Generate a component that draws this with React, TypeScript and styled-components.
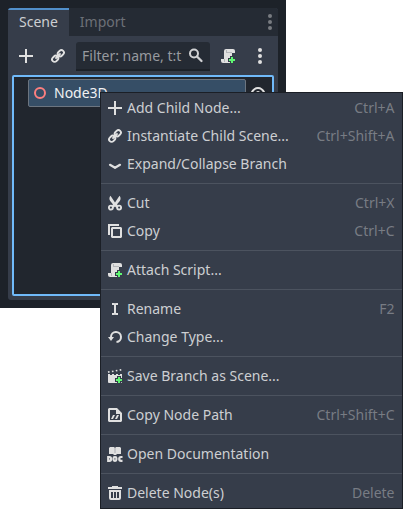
import React from "react";
import styled, { createGlobalStyle } from "styled-components";

const GlobalStyle = createGlobalStyle`
  * { box-sizing: border-box; }
  body {
    margin: 0;
    background: #fff;
    font-family: "Noto Sans", sans-serif;
    font-size: 14px;
    line-height: 20px;
    overflow: hidden;
  }
`;

const Screen = styled.main`
  position: relative;
  width: 403px;
  height: 509px;
`;

const EditorFrame = styled.div`
  width: 286px;
  height: 308px;
  padding: 8px;
  background: #1d2229;
`;

const Dock = styled.section`
  display: flex;
  flex-direction: column;
  height: 292px;
  background: #363d4a;
  border-radius: 3px;
  overflow: hidden;
`;

const TabBar = styled.div`
  display: flex;
  height: 28px;
  background: #252b34;
`;

const Tab = styled.div<{ $active?: boolean }>`
  height: 28px;
  padding: ${(p) => (p.$active ? "2px 11px 0" : "4px 11px 0")};
  border-top: ${(p) => (p.$active ? "2px solid #5290cb" : "0")};
  background: ${(p) => (p.$active ? "#363d4a" : "transparent")};
  color: ${(p) => (p.$active ? "#cdcfd2" : "#6c7077")};
`;

const TabMenu = styled.div`
  display: flex;
  margin: 6px 0 0 auto;
  color: #797c81;
`;

const Toolbar = styled.div`
  display: flex;
  align-items: center;
  height: 39px;
  padding: 1px 10px 0;
  color: #e0e0e0;
`;

const ToolButton = styled.span<{ $gap: number }>`
  display: flex;
  margin-right: ${(p) => p.$gap}px;
`;

const FilterField = styled.div`
  display: flex;
  align-items: center;
  width: 134px;
  height: 29px;
  margin-right: 10px;
  padding: 1px 6px 0;
  border-bottom: 2px solid #1d2229;
  border-radius: 3px 3px 0 0;
  background: #252b34;
  color: #979a9f;
`;

const FilterText = styled.span`
  width: 106px;
  overflow: hidden;
  white-space: nowrap;
`;

const FilterIcon = styled.span`
  display: flex;
  flex: none;
  color: #d0d1d3;
`;

const Tree = styled.div`
  display: flex;
  height: 221px;
  margin: 0 4px;
  padding: 2px 2px 0 14px;
  border: 2px solid #70bafa;
  border-radius: 2px;
  background: #21262e;
`;

const TreeRow = styled.div`
  display: flex;
  align-items: center;
  width: 218px;
  height: 28px;
  padding-left: 3px;
  gap: 6px;
  border: 1px solid #6c7580;
  border-radius: 2px;
  background: #364e66;
  color: #f0f1f2;
`;

const Visibility = styled.span`
  margin: 6px 0 0 4px;
  color: #e0e0e0;
`;

const Menu = styled.div`
  position: absolute;
  left: 100px;
  top: 92px;
  width: 303px;
  height: 417px;
  padding: 1px 0;
  border: 1px solid #1b1f26;
  background: #363d4a;
`;

const MenuItem = styled.div`
  display: flex;
  align-items: center;
  height: 28px;
  padding: 0 7.5px 0 6px;
  color: #cdcfd2;
`;

const MenuIcon = styled.span`
  display: flex;
  width: 20px;
  color: #e0e0e0;
`;

const Shortcut = styled.span`
  margin-left: auto;
  color: #787c84;
`;

const Separator = styled.div`
  height: 11px;
  padding-top: 5px;

  &::after {
    content: "";
    display: block;
    height: 1px;
    background: #4c535f;
  }
`;

const Glyph = styled.svg`
  display: block;
  width: 16px;
  height: 16px;
  flex: none;
`;

const plusBadge = (
  <>
    <path d="M10 8h4v2h2v4h-2v2h-4v-2H8v-4h2z" fill="#363d4a" />
    <path d="M11 9h2v2h2v2h-2v2h-2v-2H9v-2h2z" fill="#5ff872" />
  </>
);

const shapes = {
  add: <path d="M7 1v6H1v2h6v6h2V9h6V7H9V1z" />,
  link: (
    <g fill="none" stroke="currentColor" strokeWidth="1.900" transform="rotate(-45 8 8)">
      <rect x=".700" y="5.500" width="6.600" height="5" rx="2.500" />
      <rect x="8.700" y="5.500" width="6.600" height="5" rx="2.500" />
      <path d="M5.200 8h5.600" strokeLinecap="round" />
    </g>
  ),
  expand: <path d="M3 8.800l5 3 5-3" fill="none" stroke="currentColor" strokeWidth="2.200" strokeLinecap="round" strokeLinejoin="round" />,
  cut: (
    <>
      <path d="M3.500 .800C2 2.500 2.200 4.500 3.200 6L5.900 9.300 5 11l1.700 1.700L8 11.500l1.300 1.200L11 11l-.900-1.700L12.800 6c1-1.500 1.200-3.500-.300-5.200L8 7.500z" />
      <g fill="none" stroke="currentColor" strokeWidth="1.900">
        <circle cx="3.900" cy="12.600" r="2" />
        <circle cx="12.100" cy="12.600" r="2" />
      </g>
    </>
  ),
  copy: (
    <>
      <path d="M1 1h11v2H3v9H1z" />
      <path d="M5 4h9l1 1v9l-1 1H5l-1-1V5zm1 2v7h7V6z" fillRule="evenodd" />
    </>
  ),
  script: (
    <>
      <path d="M6 1a2 2 0 0 0-2 2v8H1v2a2 2 0 0 0 2 2h7a2 2 0 0 0 2-2V5h3V3a2 2 0 0 0-2-2z" />
      <path d="M6 2h1v3H6zM7 4h5v1H7zM4 11h1v3H4z" fill="#b4b6b9" />
      {plusBadge}
    </>
  ),
  rename: <path d="M5 2h2.500l.5.500.500-.500H11v2H9v8h2v2H8.500L8 13.500l-.500.500H5v-2h2V4H5z" />,
  reload: (
    <>
      <path d="M4 9V8a5 5 0 1 1 5.500 5" fill="none" stroke="currentColor" strokeWidth="2" />
      <path d="M1 8h6l-3 4z" />
    </>
  ),
  saveScene: (
    <>
      <path d="M1 7h14v7a1 1 0 0 1-1 1H2a1 1 0 0 1-1-1z" />
      <path d="m.800 3.300 1.600-.300.400 1.600-1.600.300zM4.700 2.700l1.600-.300.400 1.600-1.600.300zM8.600 2l1.600-.300.400 1.600-1.600.300zM12.500 1.300l1.600-.300.400 1.600-1.600.300zM1 6h2v1H1zM5 6h2v1H5zM9 6h2v1H9zM13 6h2v1h-2z" />
      {plusBadge}
    </>
  ),
  nodePath: (
    <>
      <path d="M2 1h8l5 5v8l-1 1H2l-1-1V2zm1 2v10h10V7H9V3z" fillRule="evenodd" />
      <path d="M4 12l2-4h2l-2 4zM8 12l2-4h2l-2 4z" />
    </>
  ),
  docs: (
    <>
      <path d="M3 1h4l1 1 1-1h4l1 1v6h-4l-1 1H7L6 8H2V2z" />
      <path d="M8 2v5" stroke="#9da0a6" strokeWidth=".8" />
      <g fill="none" stroke="currentColor" strokeWidth="2.200">
        <path d="M1.200 11h1.300q1.600 0 1.600 1.900t-1.600 1.900H1.200z" />
        <rect x="6.500" y="11" width="2.900" height="3.800" rx="1.300" />
        <path d="M15.500 11h-1.400q-1.900 0-1.900 1.900t1.900 1.900h1.400" />
      </g>
    </>
  ),
  trash: <path d="M5 1v1H1v2h14V2h-4V1zM2 5v8a2 2 0 0 0 2 2h8a2 2 0 0 0 2-2V5zm2 2h2v6H4zm3 0h2v6H7zm3 0h2v6h-2z" fillRule="evenodd" />,
  search: (
    <g fill="none" stroke="currentColor" strokeWidth="2">
      <circle cx="6" cy="5.500" r="4" />
      <path d="m9 8.500 4.500 4.500" strokeWidth="2.300" strokeLinecap="round" />
    </g>
  ),
  dots: (
    <>
      <circle cx="8" cy="2" r="2" />
      <circle cx="8" cy="8" r="2" />
      <circle cx="8" cy="14" r="2" />
    </>
  ),
  node: <circle cx="8" cy="8" r="5" fill="none" stroke="#fc7f7f" strokeWidth="2" />,
  eye: (
    <>
      <path d="M1.500 8C3 5 5 3 8 3s5 2 6.500 5C13 11 11 13 8 13s-5-2-6.500-5z" fill="none" stroke="currentColor" strokeWidth="2" />
      <circle cx="8" cy="8" r="2" />
    </>
  ),
};

type IconName = keyof typeof shapes;

const Icon = ({ name }: { name: IconName }) => (
  <Glyph viewBox="0 0 16 16" fill="currentColor" aria-hidden="true">
    {shapes[name]}
  </Glyph>
);

type Entry = { icon: IconName; label: string; shortcut?: string };

const groups: Entry[][] = [
  [
    { icon: "add", label: "Add Child Node...", shortcut: "Ctrl+A" },
    { icon: "link", label: "Instantiate Child Scene...", shortcut: "Ctrl+Shift+A" },
    { icon: "expand", label: "Expand/Collapse Branch" },
  ],
  [
    { icon: "cut", label: "Cut", shortcut: "Ctrl+X" },
    { icon: "copy", label: "Copy", shortcut: "Ctrl+C" },
  ],
  [{ icon: "script", label: "Attach Script..." }],
  [
    { icon: "rename", label: "Rename", shortcut: "F2" },
    { icon: "reload", label: "Change Type..." },
  ],
  [{ icon: "saveScene", label: "Save Branch as Scene..." }],
  [{ icon: "nodePath", label: "Copy Node Path", shortcut: "Ctrl+Shift+C" }],
  [{ icon: "docs", label: "Open Documentation" }],
  [{ icon: "trash", label: "Delete Node(s)", shortcut: "Delete" }],
];

export default function App() {
  return (
    <Screen>
      <GlobalStyle />
      <EditorFrame>
        <Dock>
          <TabBar>
            <Tab $active>Scene</Tab>
            <Tab>Import</Tab>
            <TabMenu>
              <Icon name="dots" />
            </TabMenu>
          </TabBar>
          <Toolbar>
            <ToolButton $gap={16}><Icon name="add" /></ToolButton>
            <ToolButton $gap={10}><Icon name="link" /></ToolButton>
            <FilterField>
              <FilterText>Filter: name, t:t</FilterText>
              <FilterIcon><Icon name="search" /></FilterIcon>
            </FilterField>
            <ToolButton $gap={16}><Icon name="script" /></ToolButton>
            <ToolButton $gap={0}><Icon name="dots" /></ToolButton>
          </Toolbar>
          <Tree>
            <TreeRow>
              <Icon name="node" />
              Node3D
            </TreeRow>
            <Visibility><Icon name="eye" /></Visibility>
          </Tree>
        </Dock>
      </EditorFrame>
      <Menu>
        {groups.map((group, index) => (
          <React.Fragment key={group[0].label}>
            {index > 0 && <Separator />}
            {group.map((entry) => (
              <MenuItem key={entry.label}>
                <MenuIcon><Icon name={entry.icon} /></MenuIcon>
                {entry.label}
                {entry.shortcut && <Shortcut>{entry.shortcut}</Shortcut>}
              </MenuItem>
            ))}
          </React.Fragment>
        ))}
      </Menu>
    </Screen>
  );
}
